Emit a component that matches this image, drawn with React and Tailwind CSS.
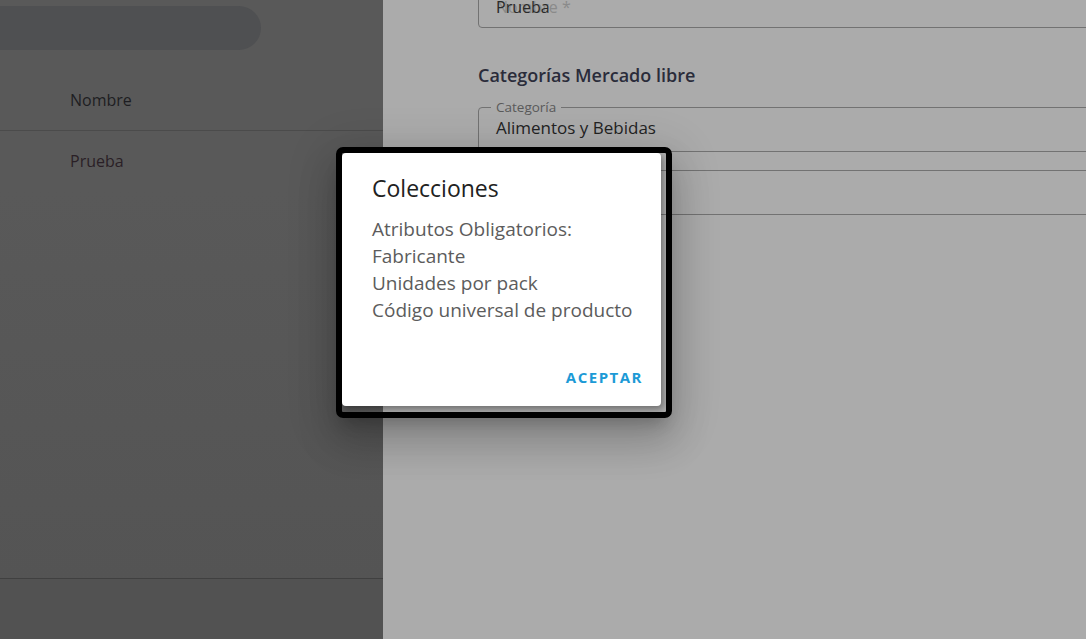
import React from "react";

export default function App() {
  const font = { fontFamily: '"Open Sans", "Noto Sans", sans-serif' };
  return (
    <div className="relative flex h-[639px] w-[1086px] overflow-hidden" style={font}>
      {/* Left drawer */}
      <div className="flex h-full w-[383px] shrink-0 flex-col bg-[#595959]">
        <div className="mt-[6px] h-[44px] w-[261px] rounded-r-[22px] bg-[#4f5052]" />
        <div className="flex h-[81px] items-center border-b border-[#4b4b4b] pl-[70px] pt-[19px] text-[16px] text-[#1e1e22]">
          Nombre
        </div>
        <div className="flex h-[60px] items-center pl-[70px] text-[16px] text-[#2a1f26]">
          Prueba
        </div>
        <div className="flex-1 border-b border-[#404040] bg-gradient-to-b from-[#595959] to-[#545454]" />
        <div className="h-[60px] bg-[#525252]" />
      </div>

      {/* Right content */}
      <div className="flex-1 overflow-hidden bg-[#ababab]">
        <div className="ml-[95px] mt-[-17px] w-[700px]">
          <div className="relative h-[45px] rounded-[4px] border border-[#727272]">
            <span className="absolute left-[17px] top-[11px] text-[16px] text-[#8a8a8a]">Nombre *</span>
            <span className="absolute left-[17px] top-[11px] text-[16px] text-[#2a2a2a]">Prueba</span>
          </div>
          <div className="mt-[34px] text-[18px] font-semibold leading-[27px] text-[#2a2c3a]">Categorías Mercado libre</div>
          <div className="relative mt-[18px] h-[45px] rounded-[4px] border border-[#727272]">
            <span className="absolute left-[12px] top-[-10px] bg-[#ababab] px-[5px] text-[13.5px] leading-[18px] text-[#5a5a5a]">
              Categoría
            </span>
            <span className="absolute left-[17px] top-[8px] text-[17px] leading-[24px] text-[#232323]">Alimentos y Bebidas</span>
          </div>
          <div className="mt-[18px] h-[45px] rounded-[4px] border border-[#727272]" />
        </div>
      </div>

      {/* Dialog */}
      <div className="absolute left-[336px] top-[147px] h-[271px] w-[336px] rounded-[7px] border-[6px] border-black shadow-[0_11px_15px_-7px_rgba(0,0,0,0.2),0_24px_38px_3px_rgba(0,0,0,0.14),0_9px_46px_8px_rgba(0,0,0,0.12)]">
        <div className="flex h-[253px] w-[319px] flex-col rounded-[4px] bg-white shadow-[2px_3px_6px_rgba(0,0,0,0.35)]">
          <div className="pl-[30px] pt-[20px] text-[23px] leading-[30px] text-[#212121]">Colecciones</div>
          <div className="pl-[30px] pt-[13px] text-[19px] leading-[27px] text-[#5c5c5c]">
            <div>Atributos Obligatorios:</div>
            <div>Fabricante</div>
            <div>Unidades por pack</div>
            <div>Código universal de producto</div>
          </div>
          <div className="mt-auto flex justify-end pb-[19px] pr-[18px]">
            <span className="text-[15px] font-bold leading-[20px] tracking-[1.5px] text-[#1c9ad6]">ACEPTAR</span>
          </div>
        </div>
      </div>
    </div>
  );
}
